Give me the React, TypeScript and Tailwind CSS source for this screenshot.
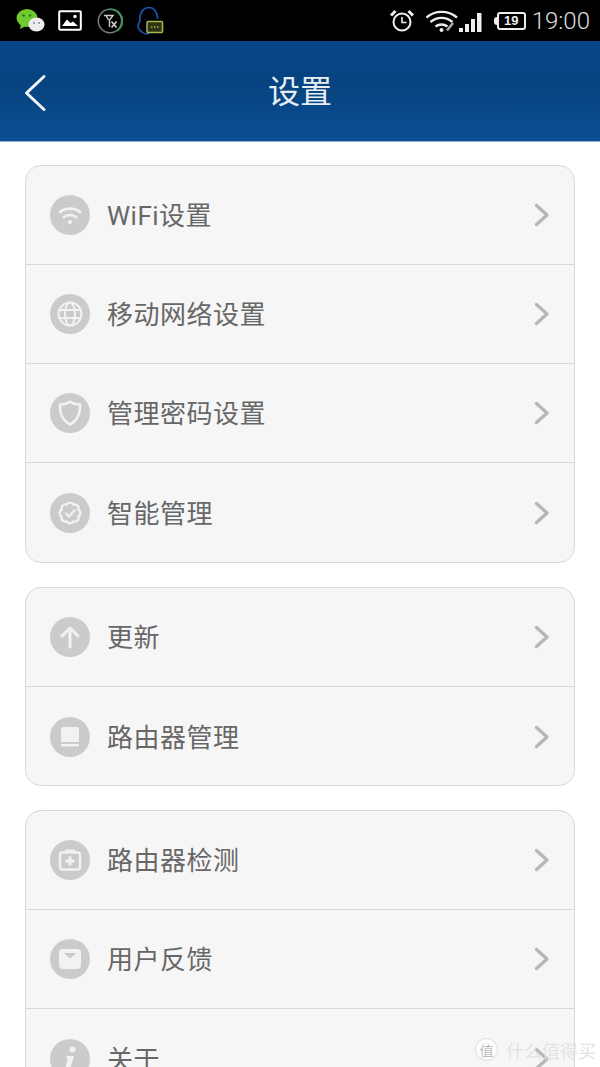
import React from "react";

const CJK = "font-['Roboto','Noto_Sans_CJK_SC',sans-serif]";

function WifiIcon() {
  return (
    <svg viewBox="0 0 40 40" className="h-10 w-10" fill="none" stroke="#f2f2f2" strokeLinecap="round">
      <path d="M10 17 C15.500 12.500 24.500 12.500 30 17" strokeWidth="2.600" />
      <path d="M14 22 C17.500 19.300 22.500 19.300 26 22" strokeWidth="2.600" />
      <circle cx="20" cy="27" r="2" fill="#f2f2f2" stroke="none" />
    </svg>
  );
}

function GlobeIcon() {
  return (
    <svg viewBox="0 0 40 40" className="h-10 w-10" fill="none" stroke="#f2f2f2" strokeWidth="2">
      <circle cx="20" cy="20" r="11.500" />
      <ellipse cx="20" cy="20" rx="5" ry="11.500" />
      <path d="M9.500 16 H30.500 M9.500 24 H30.500" />
    </svg>
  );
}

function ShieldIcon() {
  return (
    <svg viewBox="0 0 40 40" className="h-10 w-10" fill="none" stroke="#f2f2f2" strokeWidth="2.400" strokeLinejoin="round">
      <path d="M20 8.500 C23 10.800 26.500 11.500 30 11.500 C30.500 20 28 27 20 31.500 C12 27 9.500 20 10 11.500 C13.500 11.500 17 10.800 20 8.500 Z" />
    </svg>
  );
}

function GearCheckIcon() {
  return (
    <svg viewBox="0 0 40 40" className="h-10 w-10" fill="none" stroke="#f2f2f2" strokeWidth="2.400" strokeLinejoin="round" strokeLinecap="round">
      <path d="M28.300 23.400 A3.800 3.800 0 0 1 23.400 28.300 A3.800 3.800 0 0 1 16.600 28.300 A3.800 3.800 0 0 1 11.700 23.400 A3.800 3.800 0 0 1 11.700 16.600 A3.800 3.800 0 0 1 16.600 11.700 A3.800 3.800 0 0 1 23.400 11.700 A3.800 3.800 0 0 1 28.300 16.600 A3.800 3.800 0 0 1 28.300 23.400 Z" />
      <path d="M16 20.500 L19 23.500 L24.500 17.500" />
    </svg>
  );
}

function UpIcon() {
  return (
    <svg viewBox="0 0 40 40" className="h-10 w-10" fill="none" stroke="#f2f2f2" strokeWidth="3" strokeLinecap="round" strokeLinejoin="round">
      <path d="M20 30 V11 M12 19 L20 11 L28 19" />
    </svg>
  );
}

function RouterIcon() {
  return (
    <svg viewBox="0 0 40 40" className="h-10 w-10">
      <path d="M13 10 H27 A2 2 0 0 1 29 12 V25 H11 V12 A2 2 0 0 1 13 10 Z" fill="#f2f2f2" />
      <rect x="11" y="27" width="18" height="2.500" fill="#f2f2f2" />
    </svg>
  );
}

function KitIcon() {
  return (
    <svg viewBox="0 0 40 40" className="h-10 w-10">
      <path d="M16 12 V10.500 H24 V12" fill="none" stroke="#f2f2f2" strokeWidth="2" />
      <rect x="10" y="12.500" width="20" height="17" rx="2.500" fill="none" stroke="#f2f2f2" strokeWidth="2.400" />
      <path d="M20 16.500 V25.500 M15.500 21 H24.500" stroke="#f2f2f2" strokeWidth="2.800" />
    </svg>
  );
}

function MailIcon() {
  return (
    <svg viewBox="0 0 40 40" className="h-10 w-10">
      <rect x="9" y="10" width="22" height="20" rx="4" fill="#f2f2f2" />
      <path d="M13.500 14 H26.500 L20 19.500 Z" fill="#cbcbcb" />
    </svg>
  );
}

function InfoIcon() {
  return (
    <svg viewBox="0 0 40 40" className="h-10 w-10" fill="#f2f2f2">
      <circle cx="22.500" cy="10.500" r="3" />
      <path d="M17 17 H24 L20.500 28.500 C20.300 29.500 21.500 29.500 23.500 28 L24 29.500 C21 32.500 14.500 33.500 15.300 29 L18 20 H16.500 Z" />
    </svg>
  );
}

function Chevron() {
  return (
    <svg viewBox="0 0 16 24" className="h-6 w-4" fill="none" stroke="#b7b7b7" strokeWidth="3.400" strokeLinecap="round" strokeLinejoin="round">
      <path d="M2.500 2.500 L13 12 L2.500 21.500" />
    </svg>
  );
}

function Row({ icon, label, last }: { icon: React.ReactNode; label: string; last?: boolean }) {
  return (
    <div className={`flex h-[99px] shrink-0 items-center pl-6 pr-6 ${last ? "h-[98px]" : "border-b border-[#d9d9d9]"}`}>
      <div className="flex h-10 w-10 items-center justify-center rounded-full bg-[#cbcbcb]">{icon}</div>
      <span className={`ml-[17px] flex-1 pt-[2px] text-[26px] leading-none tracking-[0.5px] text-[#676767] ${CJK}`}>{label}</span>
      <Chevron />
    </div>
  );
}

function StatusBar() {
  return (
    <div className="flex h-[41px] shrink-0 items-center bg-black pl-4 pr-[10px]">
      {/* wechat */}
      <svg viewBox="0 0 30 26" className="h-[26px] w-[30px]">
        <ellipse cx="11" cy="10" rx="10.500" ry="9" fill="#6fc92f" />
        <path d="M5 16 L4 21 L10 18 Z" fill="#6fc92f" />
        <circle cx="7.500" cy="7.500" r="1.300" fill="#2f7a10" />
        <circle cx="14" cy="7.500" r="1.300" fill="#2f7a10" />
        <ellipse cx="20.500" cy="16.500" rx="8" ry="7" fill="#ededed" />
        <circle cx="18" cy="15" r="1" fill="#888" />
        <circle cx="23" cy="15" r="1" fill="#888" />
      </svg>
      {/* picture */}
      <svg viewBox="0 0 24 21" className="ml-[12px] h-[21px] w-6">
        <rect x="1.200" y="1.200" width="21.600" height="18.600" rx="1" fill="none" stroke="#fff" strokeWidth="2" />
        <path d="M4 16 L9 9.500 L12.500 13 L15 11.500 L20 16 Z" fill="#fff" />
        <circle cx="17" cy="6.500" r="1.700" fill="#fff" />
      </svg>
      {/* no sim */}
      <svg viewBox="0 0 26 26" className="ml-[15px] h-[26px] w-[26px]">
        <circle cx="13" cy="13" r="11.700" fill="none" stroke="#7d7d7d" strokeWidth="1.500" />
        <path d="M13 1.300 A11.700 11.700 0 0 1 20 23" fill="none" stroke="#2f9a5a" strokeWidth="1.500" />
        <path d="M7 7.500 H16 L12.500 12 V19 M9 7.500 L11.500 12" fill="none" stroke="#cfcfcf" strokeWidth="1.400" />
        <path d="M14.500 13.500 L19.500 19.500 M19.500 13.500 L14.500 19.500" stroke="#cfcfcf" strokeWidth="1.600" />
      </svg>
      {/* qq service */}
      <svg viewBox="0 0 28 30" className="ml-[13px] h-[30px] w-[28px]">
        <path d="M6 26 C1 23 1 19 4 15 C3 6 8 1.500 13 1.500 C18 1.500 21.500 6 21.500 13" fill="none" stroke="#1f4fb0" strokeWidth="1.700" />
        <path d="M6 26 C8 28 11 28 13 27.500" fill="none" stroke="#1f4fb0" strokeWidth="1.700" />
        <rect x="11" y="15.500" width="15.500" height="11" rx="1" fill="#2d3514" stroke="#a9b84c" strokeWidth="1.500" />
        <path d="M15 21 H16.500 M18 21 H19.500 M21 21 H22.500" stroke="#a9b84c" strokeWidth="1.500" />
      </svg>
      <div className="flex-1" />
      {/* alarm */}
      <svg viewBox="0 0 26 24" className="h-6 w-[26px]" fill="none" stroke="#eee" strokeWidth="2">
        <circle cx="13" cy="13" r="8.500" />
        <path d="M13 8 V13.500 H17.500" strokeWidth="1.600" />
        <path d="M2 6.500 L6.500 2 M24 6.500 L19.500 2" strokeWidth="3" />
      </svg>
      {/* wifi + signal */}
      <svg viewBox="0 0 61 24" className="ml-[11px] h-6 w-[61px]">
        <g fill="none" stroke="#eee" strokeWidth="2.400">
          <path d="M0.500 8.500 C9 1 22 1 31 8.500" />
          <path d="M4.500 13 C11 7.500 20 7.500 26.500 13" />
          <path d="M9.500 17.500 C13 14.800 18 14.800 21.500 17.500" />
        </g>
        <circle cx="15.500" cy="21" r="2" fill="#eee" />
        <path d="M21 21.500 L27 14" stroke="#aaa" strokeWidth="2.500" />
        <rect x="33" y="19" width="4" height="4" fill="#eee" />
        <rect x="39" y="15" width="4" height="8" fill="#eee" />
        <rect x="45" y="10" width="4" height="13" fill="#eee" />
        <rect x="51" y="4" width="4.500" height="19" fill="#eee" />
      </svg>
      {/* battery */}
      <div className="ml-[7px] flex items-center">
        <div className="h-[8px] w-[3px] rounded-l-sm bg-[#eee]" />
        <div className="flex h-[18px] w-[29px] items-center justify-center rounded-[3px] border-2 border-[#eee]">
          <span className="font-['Liberation_Sans',sans-serif] text-[13px] leading-none font-bold text-[#eee]">19</span>
        </div>
      </div>
      <span className="ml-[6px] font-['Roboto',sans-serif] text-[24px] leading-none font-light text-[#dedede]">19:00</span>
    </div>
  );
}

export default function App() {
  return (
    <div className="relative flex h-[1067px] w-[600px] flex-col overflow-hidden bg-white">
      <StatusBar />

      <div className="relative flex h-[101px] shrink-0 items-center justify-center border-b border-[#8fb2d8] bg-gradient-to-b from-[#08468b] via-[#06437f] via-40% to-[#0c4f94]">
        <svg viewBox="0 0 24 38" className="absolute top-[33px] left-[23px] h-[38px] w-6" fill="none" stroke="#f4f6f8" strokeWidth="3" strokeLinecap="round" strokeLinejoin="round">
          <path d="M21 2.500 L3.500 19 L21 35.500" />
        </svg>
        <span className={`pt-[2px] text-[32px] leading-none text-[#e8edf3] ${CJK}`}>设置</span>
      </div>

      <div className="flex flex-col gap-[24px] px-[25px] pt-[23px]">
        <div className="flex h-[398px] shrink-0 flex-col overflow-hidden rounded-[16px] border border-[#d9d9d9] bg-[#f6f6f6]">
          <Row icon={<WifiIcon />} label="WiFi设置" />
          <Row icon={<GlobeIcon />} label="移动网络设置" />
          <Row icon={<ShieldIcon />} label="管理密码设置" />
          <Row icon={<GearCheckIcon />} label="智能管理" last />
        </div>

        <div className="flex h-[199px] shrink-0 flex-col overflow-hidden rounded-[16px] border border-[#d9d9d9] bg-[#f6f6f6]">
          <Row icon={<UpIcon />} label="更新" />
          <Row icon={<RouterIcon />} label="路由器管理" last />
        </div>

        <div className="flex h-[398px] shrink-0 flex-col overflow-hidden rounded-[16px] border border-[#d9d9d9] bg-[#f6f6f6]">
          <Row icon={<KitIcon />} label="路由器检测" />
          <Row icon={<MailIcon />} label="用户反馈" />
          <Row icon={<InfoIcon />} label="关于" last />
        </div>
      </div>

      {/* watermark */}
      <div className="absolute top-[1038px] right-[4px] flex items-center whitespace-nowrap">
        <div className="flex h-[23px] w-[23px] items-center justify-center rounded-full border border-[#dcdcdc] bg-white/80 font-['Noto_Sans_CJK_SC',sans-serif] text-[14px] leading-none text-[#bdbdbd]">值</div>
        <span className="ml-[8px] font-['Noto_Sans_CJK_SC',sans-serif] text-[18px] leading-none text-[#e3e3e3]">什么值得买</span>
      </div>
    </div>
  );
}
